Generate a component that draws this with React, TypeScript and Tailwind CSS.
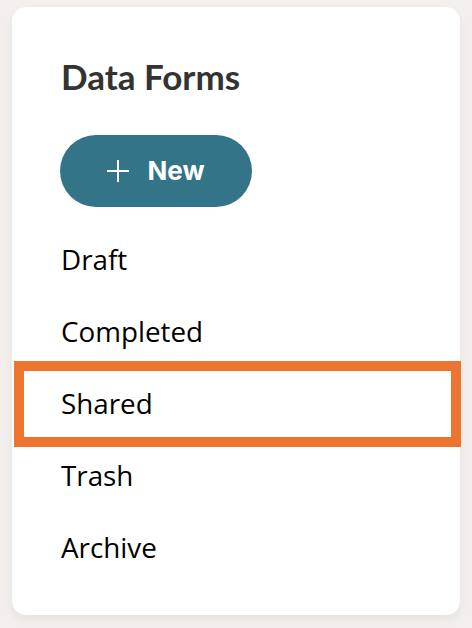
import React from 'react';

const items = ['Draft', 'Completed', 'Shared', 'Trash', 'Archive'];

export default function App() {
  return (
    <div className="min-h-[628px] w-[472px] bg-[#f2efec] pt-[7px] pl-[12px]">
      <div className="w-[448px] h-[608px] bg-white rounded-[14px] shadow-[0_4px_10px_rgba(0,0,0,0.06)] pt-[52px] pb-[32px]">
        <h1 className="pl-[49px] text-[35px] leading-none font-bold text-[#333333] font-['Lato',sans-serif]">
          Data Forms
        </h1>

        {/* New button */}
        <div className="pl-[48px] mt-[41px]">
          <button className="w-[192px] h-[72px] rounded-full bg-[#337489] flex items-center justify-center gap-[18px] text-white">
            <svg width="22" height="22" viewBox="0 0 22 22" fill="none" stroke="currentColor" strokeWidth="2">
              <path d="M11 0v22M0 11h22" />
            </svg>
            <span className="text-[26px] font-bold font-['Inter',sans-serif] leading-none">New</span>
          </button>
        </div>

        {/* Folder list */}
        <ul className="mt-[17px]">
          {items.map((item) => (
            <li key={item} className="relative h-[72px] flex items-center pl-[49px]">
              {item === 'Shared' && (
                <div className="absolute top-[-7px] bottom-[-7px] left-[2px] right-[-1px] border-[10px] border-[#ee7432]" />
              )}
              <span className="text-[27.8px] leading-none text-black font-['Open_Sans',sans-serif]">{item}</span>
            </li>
          ))}
        </ul>
      </div>
    </div>
  );
}
